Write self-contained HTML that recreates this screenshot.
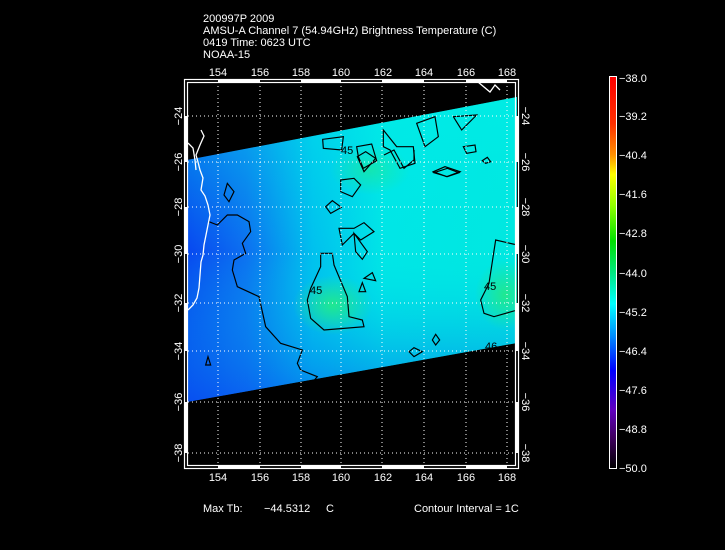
<!DOCTYPE html>
<html><head><style>
html,body{margin:0;padding:0;background:#000;width:725px;height:550px;overflow:hidden}
svg{display:block}
text{font-family:"Liberation Sans",sans-serif;fill:#fff;font-size:11px}
</style></head><body>
<svg width="725" height="550" viewBox="0 0 725 550" xmlns="http://www.w3.org/2000/svg">
<defs>
<linearGradient id="sw" x1="0" x2="1" y1="0" y2="0">
<stop offset="0" stop-color="#0848f0"/>
<stop offset="0.18" stop-color="#0c70f0"/>
<stop offset="0.38" stop-color="#00c0ee"/>
<stop offset="0.6" stop-color="#00e6e6"/>
<stop offset="1" stop-color="#00e8e0"/>
</linearGradient>
<linearGradient id="swv" x1="0" x2="0" y1="0" y2="1">
<stop offset="0" stop-color="#00f0e8" stop-opacity="0.5"/>
<stop offset="0.5" stop-color="#00e8e8" stop-opacity="0"/>
<stop offset="1" stop-color="#0850f0" stop-opacity="0.6"/>
</linearGradient>
<radialGradient id="g1" cx="0.5" cy="0.5" r="0.5">
<stop offset="0" stop-color="#20e890"/><stop offset="1" stop-color="#20e890" stop-opacity="0"/>
</radialGradient>
<linearGradient id="cb" x1="0" x2="0" y1="0" y2="1">
<stop offset="0" stop-color="#ff0000"/>
<stop offset="0.12" stop-color="#ff3000"/>
<stop offset="0.2" stop-color="#ff9000"/>
<stop offset="0.25" stop-color="#ffff00"/>
<stop offset="0.33" stop-color="#90ff00"/>
<stop offset="0.42" stop-color="#00e000"/>
<stop offset="0.5" stop-color="#00e880"/>
<stop offset="0.58" stop-color="#00ffff"/>
<stop offset="0.66" stop-color="#0090ff"/>
<stop offset="0.75" stop-color="#0000ff"/>
<stop offset="0.85" stop-color="#6000c0"/>
<stop offset="0.92" stop-color="#400060"/>
<stop offset="1" stop-color="#000000"/>
</linearGradient>
<clipPath id="swc"><polygon points="187,160 517,97 517,343 187,402"/></clipPath>
</defs>

<text x="203" y="22">200997P 2009</text>
<text x="203" y="34">AMSU-A Channel 7 (54.94GHz) Brightness Temperature (C)</text>
<text x="203" y="46">0419 Time: 0623 UTC</text>
<text x="203" y="58">NOAA-15</text>

<g clip-path="url(#swc)">
<rect x="187" y="95" width="330" height="310" fill="url(#sw)"/>
<rect x="187" y="95" width="330" height="310" fill="url(#swv)"/>
<ellipse cx="333" cy="305" rx="40" ry="30" fill="url(#g1)"/>
<ellipse cx="505" cy="295" rx="30" ry="35" fill="url(#g1)"/>
<ellipse cx="370" cy="170" rx="40" ry="25" fill="url(#g1)" opacity="0.6"/>
</g>

<g transform="translate(184 150) scale(0.33333)" fill="none" stroke="#000" stroke-width="3.5">
<path d="M75,215 L100,225 L130,195 L160,195 L195,215 L200,245 L175,280 L185,310 L150,330 L145,360 L160,410 L225,440 L245,530 L290,580 L355,600 L340,640 L350,660 L400,680 L370,715"/>
<path d="M410,310 L445,310 L450,345 L490,440 L495,500 L535,510 L540,530 L420,540 L380,505 L370,450 L380,415 L410,350 Z"/>
<path d="M1000,285 L935,270 L915,400 L890,450 L900,490 L930,500 L1000,480"/>
<path d="M130,100 L150,125 L135,155 L120,135 Z"/>
<path d="M470,90 L510,85 L530,105 L505,140 L470,125 Z"/>
<path d="M425,170 L445,152 L472,172 L440,190 Z"/>
<path d="M465,235 L510,235 L540,218 L570,245 L530,270 L510,250 L475,285 Z M510,250 L550,305 L535,328 L515,305 Z"/>
<path d="M540,385 L565,368 L575,392 Z M535,398 L545,425 L525,425 Z"/>
<path d="M750,68 L790,55 L825,68 L790,80 Z"/>
<path d="M895,32 L910,22 L920,35 L905,40 Z"/>
<path d="M745,570 L755,553 L767,570 L755,585 Z"/>
<path d="M675,605 L690,593 L715,605 L690,620 Z"/>
<path d="M65,645 L72,620 L80,645 Z"/>
<path d="M520,20 L545,5 L575,25 L540,65 Z"/>
<path d="M600,15 L630,0 L660,55 L690,30 L690,0"/>
</g>
<g transform="translate(150 0) scale(0.33333)" fill="none" stroke="#000" stroke-width="3.5">
<path d="M518,418 L520,445 L575,450 L580,410 Z"/>
<path d="M620,440 L665,432 L680,482 L640,505 L625,470 Z"/>
<path d="M700,390 L740,440 L790,440 L795,490 L750,505 L720,450 L700,440 Z"/>
<path d="M800,370 L855,350 L865,410 L825,440 Z"/>
<path d="M910,350 L980,345 L935,390 Z"/>
<path d="M940,440 L975,435 L978,455 L950,460 Z"/>
<path d="M850,515 L885,500 L930,515 L890,530 Z"/>
</g>
<text x="341" y="154" font-size="9" style="fill:#000">45</text>
<text x="484" y="290" font-size="9" style="fill:#000">45</text>
<text x="310" y="294" font-size="9" style="fill:#000">45</text>
<text x="485" y="350" font-size="9" style="fill:#000">46</text>

<g fill="none" stroke="#fff" stroke-width="1.3">
<path d="M201,130 L204,136 L200,145 L198,150 L196,155 L198,162 L200,170 L203,178 L201,190 L205,196 L208,205 L210,215 L208,225 L206,235 L204,245 L203,255 L201,262 L200,275 L199,288 L197,298 L193,305 L188,310"/>
<path d="M188,143 L193,148 L195,160 L196,170"/>
<path d="M478,82 L490,92 L495,85 L500,90"/>
</g>

<g stroke="#fff" stroke-width="1" stroke-dasharray="1 3">
<path d="M218,82V466M260,82V466M301,82V466M341,82V466M382,82V466M424,82V466M466,82V466M507,82V466"/>
<path d="M188,116H516M188,162H516M188,207H516M188,254H516M188,303H516M188,351H516M188,402H516M188,453H516"/>
</g>

<rect x="184.5" y="79.5" width="334" height="389" fill="none" stroke="#fff" stroke-width="1.2"/>
<rect x="187.5" y="82.5" width="328" height="383" fill="none" stroke="#fff" stroke-width="1.2"/>
<g fill="#fff">
<rect x="218" y="79" width="42" height="4"/><rect x="301" y="79" width="40" height="4"/><rect x="382" y="79" width="42" height="4"/><rect x="466" y="79" width="41" height="4"/>
<rect x="218" y="465" width="42" height="4"/><rect x="301" y="465" width="40" height="4"/><rect x="382" y="465" width="42" height="4"/><rect x="466" y="465" width="41" height="4"/>
<rect x="184" y="116" width="4" height="46"/><rect x="184" y="207" width="4" height="47"/><rect x="184" y="303" width="4" height="48"/><rect x="184" y="402" width="4" height="51"/>
<rect x="515" y="116" width="4" height="46"/><rect x="515" y="207" width="4" height="47"/><rect x="515" y="303" width="4" height="48"/><rect x="515" y="402" width="4" height="51"/>
</g>

<g text-anchor="middle">
<text x="218" y="76">154</text><text x="260" y="76">156</text><text x="301" y="76">158</text><text x="341" y="76">160</text><text x="383" y="76">162</text><text x="424" y="76">164</text><text x="466" y="76">166</text><text x="507" y="76">168</text>
<text x="218" y="481">154</text><text x="260" y="481">156</text><text x="301" y="481">158</text><text x="341" y="481">160</text><text x="383" y="481">162</text><text x="424" y="481">164</text><text x="466" y="481">166</text><text x="507" y="481">168</text>
</g>
<g text-anchor="middle">
<text transform="translate(182 116) rotate(-90)">−24</text>
<text transform="translate(182 162) rotate(-90)">−26</text>
<text transform="translate(182 207) rotate(-90)">−28</text>
<text transform="translate(182 254) rotate(-90)">−30</text>
<text transform="translate(182 303) rotate(-90)">−32</text>
<text transform="translate(182 351) rotate(-90)">−34</text>
<text transform="translate(182 402) rotate(-90)">−36</text>
<text transform="translate(182 453) rotate(-90)">−38</text>
<text transform="translate(522 116) rotate(90)">−24</text>
<text transform="translate(522 162) rotate(90)">−26</text>
<text transform="translate(522 207) rotate(90)">−28</text>
<text transform="translate(522 254) rotate(90)">−30</text>
<text transform="translate(522 303) rotate(90)">−32</text>
<text transform="translate(522 351) rotate(90)">−34</text>
<text transform="translate(522 402) rotate(90)">−36</text>
<text transform="translate(522 453) rotate(90)">−38</text>
</g>

<rect x="609.5" y="76.5" width="7" height="392" fill="url(#cb)" stroke="#fff" stroke-width="1"/>
<g>
<text x="619" y="82">−38.0</text>
<text x="619" y="120">−39.2</text>
<text x="619" y="159">−40.4</text>
<text x="619" y="198">−41.6</text>
<text x="619" y="237">−42.8</text>
<text x="619" y="277">−44.0</text>
<text x="619" y="316">−45.2</text>
<text x="619" y="355">−46.4</text>
<text x="619" y="394">−47.6</text>
<text x="619" y="433">−48.8</text>
<text x="619" y="472">−50.0</text>
</g>

<text x="203" y="512">Max Tb:</text>
<text x="264" y="512">−44.5312</text>
<text x="326" y="512">C</text>
<text x="414" y="512">Contour Interval = 1C</text>
</svg>
</body></html>
